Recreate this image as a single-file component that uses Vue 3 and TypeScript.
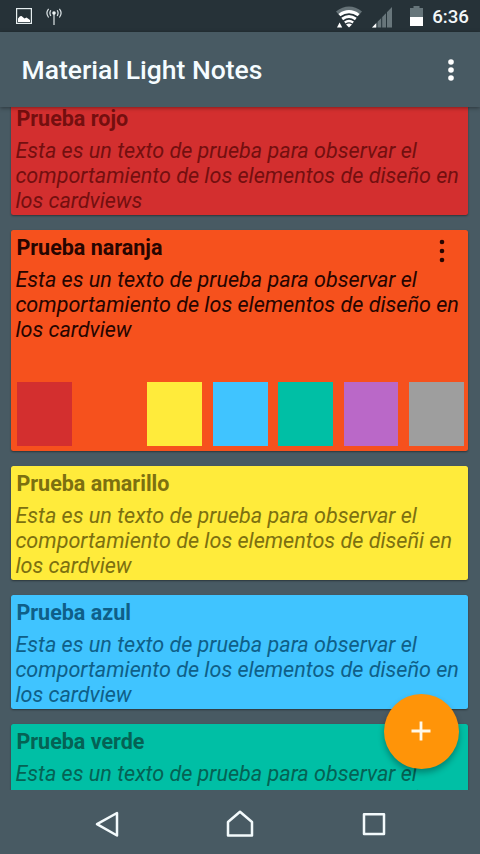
<script setup lang="ts">
import { ref } from 'vue'

interface Note {
  id: string
  title: string
  lines: string[]
  color: string
  ink: string
}

const notes: Note[] = [
  { id: 'rojo', title: 'Prueba rojo', lines: ['Esta es un texto de prueba para observar el', 'comportamiento de los elementos de diseño en', 'los cardviews'], color: '#d32f2f', ink: '#740f0f' },
  { id: 'naranja', title: 'Prueba naranja', lines: ['Esta es un texto de prueba para observar el', 'comportamiento de los elementos de diseño en', 'los cardview'], color: '#f6511d', ink: '#260500' },
  { id: 'amarillo', title: 'Prueba amarillo', lines: ['Esta es un texto de prueba para observar el', 'comportamiento de los elementos de diseñi en', 'los cardview'], color: '#ffeb3b', ink: '#7c7010' },
  { id: 'azul', title: 'Prueba azul', lines: ['Esta es un texto de prueba para observar el', 'comportamiento de los elementos de diseño en', 'los cardview'], color: '#40c4ff', ink: '#0f5f88' },
  { id: 'verde', title: 'Prueba verde', lines: ['Esta es un texto de prueba para observar el', 'comportamiento de los elementos de diseño en', 'los cardview'], color: '#00bfa5', ink: '#056254' },
]

const swatches: string[] = ['#d32f2f', '#f6511d', '#ffeb3b', '#40c4ff', '#00bfa5', '#ba68c8', '#9e9e9e']
const selected = ref<string>('naranja')
</script>

<template>
  <div class="screen">
    <header class="status">
      <div class="status-left">
        <svg class="picture" width="16" height="16" viewBox="0 0 16 16">
          <rect x=".6" y=".6" width="14.8" height="14.8" fill="none" stroke="#e6eef0" stroke-width="1.2" />
          <path d="M2 14V10.5L4 8.3L5.5 8L8.5 10.5L10.5 9.5L14 12V14Z" fill="#fff" />
        </svg>
        <svg class="antenna" width="16" height="18" viewBox="0 0 16 18">
          <g fill="none" stroke="#dce4e7" stroke-width="1.2">
            <path d="M8 5V17M4.8 2.2Q3 5 4.8 8M11.2 2.2Q13 5 11.2 8M2.6 .8Q-.8 5 2.6 9.5M13.4 .8Q16.8 5 13.4 9.5" />
          </g>
          <circle cx="8" cy="5" r="1.8" fill="#eef4f5" />
        </svg>
      </div>
      <div class="status-right">
        <svg class="wifi" width="27" height="22" viewBox="0 0 27 22">
          <path d="M0 5.5Q13 -4.5 26 5.5L23 9Q13 1.5 3 9Z" fill="#657277" />
          <g fill="none" stroke="#fff" stroke-width="3">
            <path d="M3.4 9.1Q13 2.2 22.6 9.1" />
            <path d="M6.2 13Q13 8 19.8 13" />
            <path d="M8.8 16.6Q13 13.6 17.2 16.6" stroke-width="2.4" />
          </g>
          <path d="M10 18.4Q13 16.5 16 18.4L13 21.5Z" fill="#fff" />
          <path d="M1 21.5L3.6 16.5L6.2 21.5Z" fill="#fff" />
        </svg>
        <svg class="signal" width="20" height="21" viewBox="0 0 20 21">
          <path d="M0 20.5L20 0V20.5Z" fill="#68767b" />
          <path d="M5 15V21M9.7 10V21M14.5 5V21" stroke="#26343a" stroke-width="1" />
          <path d="M0 20.5L4.2 16.2V20.5Z" fill="#fff" />
        </svg>
        <svg class="battery" width="13" height="20" viewBox="0 0 13 20">
          <path d="M0 2H3.5V0H9.5V2H13V11H0Z" fill="#66757a" />
          <path d="M0 11H13V20H0Z" fill="#fff" />
        </svg>
        <span class="clock">6:36</span>
      </div>
    </header>

    <div class="toolbar">
      <h1>Material Light Notes</h1>
      <svg class="overflow" width="8" height="24" viewBox="0 0 8 24" fill="#fff">
        <circle cx="4" cy="4" r="2.8" /><circle cx="4" cy="12" r="2.8" /><circle cx="4" cy="20" r="2.8" />
      </svg>
    </div>

    <main class="viewport">
      <div class="list">
        <article v-for="note in notes" :key="note.id" class="card" :class="{ expanded: selected === note.id }" :style="{ backgroundColor: note.color, color: note.ink }">
          <div class="card-head">
            <h2>{{ note.title }}</h2>
            <svg v-if="selected === note.id" class="menu" width="6" height="24" viewBox="0 0 6 24" fill="currentColor">
              <circle cx="3" cy="3" r="2.3" /><circle cx="3" cy="12" r="2.3" /><circle cx="3" cy="21" r="2.3" />
            </svg>
          </div>
          <p><span v-for="(line, i) in note.lines" :key="i">{{ line }}</span></p>
          <div v-if="selected === note.id" class="palette">
            <div v-for="swatch in swatches" :key="swatch" class="swatch" :style="{ backgroundColor: swatch }"></div>
          </div>
        </article>
      </div>
    </main>

    <nav class="navbar">
      <svg width="24" height="28" viewBox="0 0 24 28"><path d="M2 14.2L22 3V25.5Z" /></svg>
      <svg width="28" height="28" viewBox="0 0 28 28"><path d="M2 25.5V12L14 1.8L26 12V25.5Z" /></svg>
      <svg width="24" height="28" viewBox="0 0 24 28"><path d="M2 4.3H22V24H2Z" /></svg>
    </nav>

    <button class="fab" aria-label="+">
      <svg width="20" height="20" viewBox="0 0 20 20"><path d="M10 .5V19.5M.5 10H19.5" stroke="#fff8e8" stroke-width="2.8" /></svg>
    </button>
  </div>
</template>

<style>
body { margin: 0; background: #455a64; }
</style>

<style scoped>
* { box-sizing: border-box; }
.screen {
  position: relative;
  width: 480px;
  height: 854px;
  display: flex;
  flex-direction: column;
  overflow: hidden;
  background: #485a63;
  font-family: Roboto, "Liberation Sans", sans-serif;
}
.status {
  flex: none;
  height: 32px;
  display: flex;
  justify-content: space-between;
  background: #263238;
}
.status-left { display: flex; padding: 8px 0 0 16px; gap: 14px; }
.status-right { display: flex; align-items: flex-start; padding: 6px 11px 0 0; }
.signal { margin: 1px 0 0 9px; }
.battery { margin-left: 18px; }
.clock { margin-left: 9px; font-size: 18.7px; line-height: 22px; font-weight: 500; color: #f2f7f8; }
.toolbar {
  position: relative;
  z-index: 1;
  flex: none;
  height: 75px;
  display: flex;
  align-items: center;
  justify-content: space-between;
  padding: 1px 25.5px 0 21.5px;
  background: #485a63;
  box-shadow: 0 1px 4px rgba(0, 0, 0, .4);
}
h1 { margin: 0; font-size: 26.5px; line-height: 32px; font-weight: 500; color: #f5fcff; white-space: nowrap; }
.viewport { flex: none; height: 683px; overflow: hidden; }
.list {
  display: flex;
  flex-direction: column;
  gap: 15px;
  margin-top: -6px;
  padding: 0 11.7px 0 11.4px;
}
.card {
  flex: none;
  height: 114px;
  padding: 5px 5px 0 4px;
  border-radius: 2.5px;
  box-shadow: 0 1px 2px rgba(0, 0, 0, .4);
}
.card.expanded { height: 221px; display: flex; flex-direction: column; padding-bottom: 5px; }
.card-head { display: flex; justify-content: space-between; height: 32px; padding: 0 18px 0 1px; }
h2 { margin: 0; font-size: 21.5px; line-height: 26px; font-weight: 700; white-space: nowrap; }
.menu { flex: none; margin-top: 4px; }
p { margin: 0; font-size: 21.58px; line-height: 25.2px; font-style: italic; white-space: nowrap; }
p span { display: block; }
.palette { display: grid; grid-template-columns: repeat(7, 1fr); gap: 10.5px; height: 64.5px; margin: auto -.4px 0 0; padding-left: 1.4px; }
.navbar {
  flex: none;
  height: 64px;
  display: flex;
  justify-content: space-between;
  padding: 20px 94.5px 0 95px;
  background: #485a63;
}
.navbar path { fill: none; stroke: #f3fafc; stroke-width: 2.5; stroke-linejoin: round; }
.fab {
  position: absolute;
  z-index: 2;
  left: 384px;
  top: 694px;
  width: 75px;
  height: 75px;
  display: grid;
  place-items: center;
  padding: 0 1px 1px 0;
  border: 0;
  border-radius: 50%;
  background: #ff9408;
  box-shadow: 0 4px 6px rgba(0, 0, 0, .3);
}
</style>
